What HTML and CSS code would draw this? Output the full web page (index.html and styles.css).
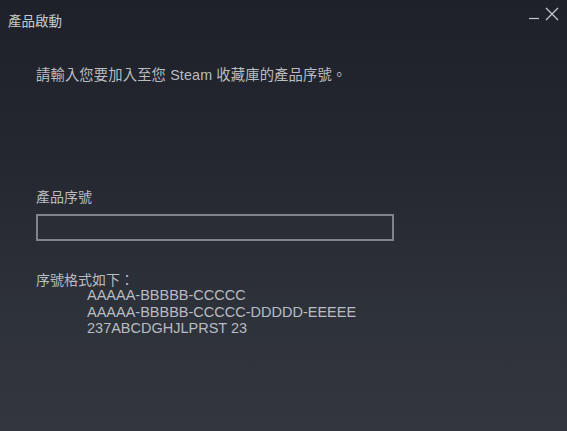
FILE: index.html
```html
<!DOCTYPE html>
<html lang="zh-Hant">
<head>
<meta charset="utf-8">
<link rel="stylesheet" href="styles.css">
</head>
<body>
<div class="window">
  <div class="titlebar">
    <span class="title">產品啟動</span>
    <div class="controls">
      <svg class="min" width="10" height="13" viewBox="0 0 10 13"><line x1="0" y1="11.5" x2="10" y2="11.5" stroke="#c4c6c9" stroke-width="1.2"/></svg>
      <svg class="close" width="14" height="14" viewBox="0 0 14 14"><path d="M1 1 L13 13 M13 1 L1 13" stroke="#c4c6c9" stroke-width="1.3" fill="none"/></svg>
    </div>
  </div>
  <div class="content">
    <p class="intro">請輸入您要加入至您 Steam 收藏庫的產品序號。</p>
    <label class="label">產品序號</label>
    <div class="input"></div>
    <p class="fmt-title">序號格式如下：</p>
    <div class="formats">
      <div>AAAAA-BBBBB-CCCCC</div>
      <div>AAAAA-BBBBB-CCCCC-DDDDD-EEEEE</div>
      <div>237ABCDGHJLPRST 23</div>
    </div>
  </div>
</div>
</body>
</html>
```
FILE: styles.css
```css
html, body {
  margin: 0;
  padding: 0;
  width: 567px;
  height: 431px;
  overflow: hidden;
}
body {
  font-family: "Liberation Sans", Arial, "Noto Sans CJK TC", sans-serif;
  color: #b9bcc0;
}
.window {
  width: 567px;
  height: 431px;
  background: linear-gradient(to bottom, #1e2129 0%, #242730 35%, #2e323b 75%, #33363f 100%);
  box-sizing: border-box;
}
.titlebar {
  height: 34px;
  display: flex;
  align-items: flex-start;
  justify-content: space-between;
}
.title {
  font-size: 13.5px;
  color: #c8cacd;
  margin-left: 8px;
  margin-top: 10px;
}
.controls {
  display: flex;
  align-items: flex-start;
  gap: 6px;
  margin-top: 7px;
  margin-right: 8px;
}
.content {
  padding: 32px 0 0 36px;
}
.intro {
  margin: 0;
  font-size: 14.3px;
  line-height: 18px;
  letter-spacing: 0.15px;
}
.label {
  display: block;
  margin-top: 104px;
  font-size: 14px;
  line-height: 18px;
}
.input {
  margin-top: 8px;
  width: 354px;
  height: 23px;
  border: 2px solid #7f838a;
  box-sizing: content-box;
  background: #2a2d35;
}
.fmt-title {
  margin: 31px 0 0 0;
  font-size: 14px;
  line-height: 16px;
}
.formats {
  margin-left: 51px;
  margin-top: -1px;
  font-size: 14.5px;
  line-height: 16.5px;
}
```
